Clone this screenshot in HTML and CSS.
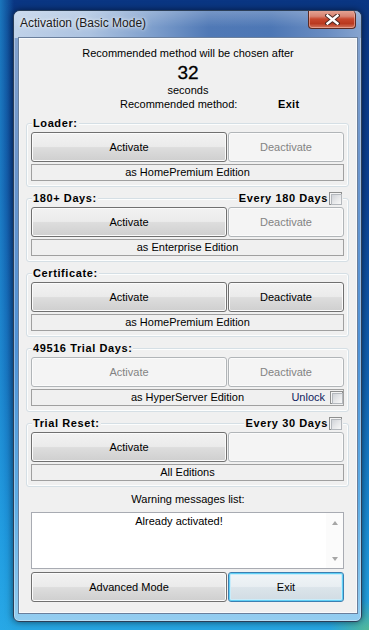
FILE: index.html
```html
<!DOCTYPE html>
<html>
<head>
<meta charset="utf-8">
<title>Activation (Basic Mode)</title>
<link rel="stylesheet" href="styles.css">
</head>
<body>
<div class="desktop">
  <div class="window">
    <div class="titlebar">
      <span class="title">Activation (Basic Mode)</span>
      <div class="close">
        <svg width="15" height="11" viewBox="0 0 15 11">
          <path d="M2.5 1.5 L12.5 9.5 M12.5 1.5 L2.5 9.5" stroke="#4a2a26" stroke-width="4.4" stroke-linecap="square" fill="none"/>
          <path d="M2.5 1.5 L12.5 9.5 M12.5 1.5 L2.5 9.5" stroke="#ffffff" stroke-width="2.4" stroke-linecap="square" fill="none"/>
        </svg>
      </div>
    </div>
    <div class="client">
      <div class="header">
        <div class="line">Recommended method will be chosen after</div>
        <div class="count">32</div>
        <div class="secs">seconds</div>
        <div class="rec"><span class="rec-label">Recommended method:</span><span class="rec-value">Exit</span></div>
      </div>

      <div class="group first">
        <div class="legend"><span class="lbl">Loader:</span></div>
        <div class="btns"><div class="btn">Activate</div><div class="btn dis">Deactivate</div></div>
        <div class="edition"><span class="ed-text">as HomePremium Edition</span></div>
      </div>

      <div class="group">
        <div class="legend"><span class="lbl">180+ Days:</span><span class="lbl right">Every 180 Days <span class="cb"></span></span></div>
        <div class="btns"><div class="btn">Activate</div><div class="btn dis">Deactivate</div></div>
        <div class="edition"><span class="ed-text">as Enterprise Edition</span></div>
      </div>

      <div class="group">
        <div class="legend"><span class="lbl">Certificate:</span></div>
        <div class="btns"><div class="btn">Activate</div><div class="btn">Deactivate</div></div>
        <div class="edition"><span class="ed-text">as HomePremium Edition</span></div>
      </div>

      <div class="group">
        <div class="legend"><span class="lbl">49516 Trial Days:</span></div>
        <div class="btns"><div class="btn dis">Activate</div><div class="btn dis">Deactivate</div></div>
        <div class="edition"><span class="ed-text">as HyperServer Edition</span><span class="ed-right"><span class="unlock">Unlock</span><span class="cb"></span></span></div>
      </div>

      <div class="group">
        <div class="legend"><span class="lbl">Trial Reset:</span><span class="lbl right">Every 30 Days <span class="cb"></span></span></div>
        <div class="btns"><div class="btn">Activate</div><div class="btn dis"></div></div>
        <div class="edition"><span class="ed-text">All Editions</span></div>
      </div>

      <div class="warn">Warning messages list:</div>
      <div class="listbox">
        <div class="list-items"><div class="item">Already activated!</div></div>
        <div class="vscroll"><span class="arr up"></span><span class="arr down"></span></div>
      </div>
      <div class="btns bottom"><div class="btn">Advanced Mode</div><div class="btn def">Exit</div></div>
    </div>
  </div>
</div>
</body>
</html>
```

FILE: styles.css
```css
* { box-sizing: border-box; }
html, body { margin: 0; padding: 0; }
body {
  width: 369px;
  height: 630px;
  overflow: hidden;
  font-family: "Liberation Sans", Arial, sans-serif;
  font-size: 11px;
  color: #000;
  background:
    radial-gradient(ellipse 40px 30px at 369px 630px, rgba(120,200,90,0.55), rgba(120,200,90,0) 100%),
    linear-gradient(90deg, rgba(40,170,235,0.55) 0px, rgba(40,170,235,0) 14px),
    linear-gradient(180deg, #0a3683 0%, #0c4193 30%, #1263b2 60%, #1b8fd6 85%, #27a6e2 100%);
}
.desktop {
  height: 630px;
  padding: 10px 0 0 13px;
}
.window {
  width: 349px;
  height: 612px;
  display: flex;
  flex-direction: column;
  border: 1px solid #2c3f58;
  border-radius: 7px 7px 6px 6px;
  background: linear-gradient(180deg, #86a3cd 0%, #6b95cc 25%, #4f92d6 55%, #5eace4 80%, #94cdf0 100%);
  box-shadow: 0 0 7px rgba(0, 0, 0, 0.55), inset 0 0 0 1px rgba(255, 255, 255, 0.35);
  overflow: hidden;
}
.titlebar {
  height: 27px;
  flex: none;
  display: flex;
  align-items: flex-start;
  background:
    linear-gradient(180deg, rgba(255,255,255,0.22) 0%, rgba(255,255,255,0) 60%),
    linear-gradient(90deg, #c0d2e9 0%, #abc2e0 22%, #7d9ecc 40%, #5079b6 56%, #4d77b5 74%, #6a8dc2 90%, #86a4cf 100%);
}
.title {
  padding: 4px 0 0 6px;
  line-height: 16px;
  font-size: 12px;
  color: #1b1b1b;
  text-shadow: 0 0 6px rgba(255,255,255,0.9), 0 0 3px rgba(255,255,255,0.8);
}
.close {
  margin: -1px 5px 0 auto;
  width: 48px;
  height: 19px;
  display: flex;
  align-items: center;
  justify-content: center;
  border: 1px solid #5b2a22;
  border-top: none;
  border-radius: 0 5px 4px 4px;
  background: linear-gradient(180deg, #e6a898 0%, #d88371 35%, #c8472d 50%, #b9391f 75%, #d2775f 100%);
  box-shadow: inset 0 0 0 1px rgba(255, 210, 200, 0.45);
}
.close svg { display: block; }

.client {
  flex: 1;
  margin: 0 4px 8px 5px;
  background: #f0f0f0;
  border: 1px solid #f8fafc;
  box-shadow: 0 0 0 1px #6a7f9c;
  padding-top: 7px;
}
.header { text-align: center; }
.line { line-height: 14px; }
.count {
  margin-top: 2px;
  font-size: 19px;
  line-height: 22px;
  -webkit-text-stroke: 0.3px #000;
}
.secs { line-height: 12px; }
.rec {
  display: flex;
  margin-top: 1px;
  line-height: 14px;
  padding-left: 100px;
  text-align: left;
}
.rec-label { width: 158px; }
.rec-value { font-weight: bold; letter-spacing: 0.3px; }

.group {
  margin: 11px 7px 0 6px;
  border: 1px solid #d5dfe5;
  border-radius: 3px;
  padding: 0 4px 5px 4px;
  box-shadow: inset 0 0 0 1px #fcfdfd;
}
.group.first { margin-top: 12px; }
.legend {
  height: 14px;
  margin-top: -8px;
  display: flex;
  justify-content: space-between;
  align-items: center;
  line-height: 14px;
}
.lbl {
  background: #f0f0f0;
  padding: 0 1px;
  margin-left: 1px;
  font-weight: bold;
  letter-spacing: 0.6px;
  display: flex;
  align-items: center;
}
.lbl.right {
  margin: 0 1px 0 0;
  padding: 0 1px 0 2px;
  gap: 1px;
}
.cb {
  width: 13px;
  height: 13px;
  flex: none;
  border: 1px solid #8e8f8f;
  background: #f4f4f4;
  padding: 1px;
  display: inline-block;
}
.cb::before {
  content: "";
  display: block;
  width: 9px;
  height: 9px;
  border: 1px solid #b4b8bd;
  background: linear-gradient(135deg, #d0d3d8 0%, #e6e7e9 50%, #f8f8f8 100%);
}

.btns {
  display: grid;
  grid-template-columns: 196px 116px;
  gap: 1px;
  margin-top: 2px;
  height: 30px;
}
.btn {
  display: flex;
  align-items: center;
  justify-content: center;
  border: 1px solid #707070;
  border-radius: 3px;
  background: linear-gradient(180deg, #f2f2f2 0%, #ebebeb 48%, #dddddd 52%, #cfcfcf 100%);
  box-shadow: inset 0 0 0 1px #fbfbfb;
  color: #000;
}
.btn.dis {
  border-color: #b1b5b8;
  background: #f4f4f4;
  box-shadow: inset 0 0 0 1px #fbfbfb;
  color: #838383;
}
.btn.def {
  border-color: #3c7fb1;
  background: linear-gradient(180deg, #f1f5f8 0%, #e8eef2 48%, #dbe4ea 52%, #d1dce3 100%);
  box-shadow: inset 0 0 0 1px #5fd0f6, inset 0 0 0 2px #c9ecfa;
}

.edition {
  margin-top: 2px;
  height: 17px;
  border: 1px solid #a0a0a0;
  display: grid;
  grid-template-columns: 1fr auto 1fr;
  align-items: center;
  line-height: 15px;
}
.ed-text { grid-column: 2; }
.ed-right {
  grid-column: 3;
  justify-self: end;
  display: flex;
  align-items: center;
  gap: 5px;
}
.unlock { color: #101c5e; }

.warn {
  margin-top: 5px;
  text-align: center;
  line-height: 14px;
}
.listbox {
  margin: 6px 12px 0 11px;
  height: 57px;
  border: 1px solid #a8abb2;
  background: #fff;
  display: grid;
  grid-template-columns: 1fr 17px;
}
.list-items { padding-top: 1px; }
.item { text-align: center; line-height: 14px; }
.vscroll {
  display: flex;
  flex-direction: column;
  justify-content: space-between;
  align-items: center;
  padding: 8px 0 7px;
  background: #fbfbfb;
}
.arr {
  width: 0;
  height: 0;
  border-left: 3.5px solid transparent;
  border-right: 3.5px solid transparent;
}
.arr.up { border-bottom: 4px solid #a6a6a6; }
.arr.down { border-top: 4px solid #a6a6a6; }
.btns.bottom {
  margin: 3px 12px 0 11px;
}
```
